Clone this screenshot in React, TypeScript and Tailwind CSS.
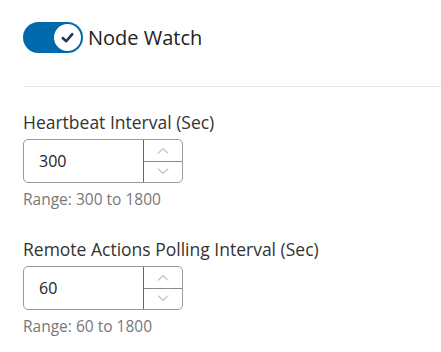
import { useState } from "react"

interface NumberFieldProps {
  label: string
  value: number
  min: number
  max: number
}

function NumberField({ label, value, min, max }: NumberFieldProps) {
  const [val, setVal] = useState(String(value))

  return (
    <div className="flex flex-col">
      <label className="text-[17.5px] leading-[24px] text-[#333]">{label}</label>
      <div className="mt-[5px] flex h-[44px] w-[160px] rounded-[5px] border border-[#9a9a9a] bg-white">
        <input
          value={val}
          onChange={(e) => setVal(e.target.value)}
          className="w-[119px] bg-transparent pl-[15px] text-[16px] text-[#222] outline-none"
        />
        <div className="flex w-[40px] flex-col border-l border-[#666]">
          <button type="button" className="flex flex-1 items-center justify-center border-b border-[#8a8a8a]">
            <svg width="12" height="7" viewBox="0 0 12 7" fill="none" stroke="#999" strokeWidth="1">
              <path d="M1 6.5 6 1.5 11 6.5" />
            </svg>
          </button>
          <button type="button" className="flex flex-1 items-center justify-center">
            <svg width="12" height="7" viewBox="0 0 12 7" fill="none" stroke="#999" strokeWidth="1">
              <path d="M1 0.5 6 5.5 11 0.5" />
            </svg>
          </button>
        </div>
      </div>
      <div className="mt-[6px] text-[15.5px] leading-[20px] text-[#777]">
        Range: {min} to {max}
      </div>
    </div>
  )
}

export default function App() {
  const [on, setOn] = useState(true)

  return (
    <div className="min-h-screen bg-white pl-[23px] pt-[22px]" style={{ fontFamily: '"Open Sans", sans-serif' }}>
      <div className="flex items-center gap-[5px]">
        <button
          type="button"
          onClick={() => setOn(!on)}
          className={`flex h-[31px] w-[60px] items-center rounded-full px-[2px] ${on ? "justify-end bg-[#006aac]" : "justify-start bg-[#bbb]"}`}
        >
          <span className="flex h-[27px] w-[27px] items-center justify-center rounded-full bg-white">
            <svg width="17" height="17" viewBox="0 0 16 16" fill="none" stroke="#1f3550" strokeWidth="2.4" strokeLinecap="round" strokeLinejoin="round">
              <path d="M3.5 8.5 6.8 11.5 12.5 4.8" />
            </svg>
          </span>
        </button>
        <span className="text-[20px] leading-[28px] text-[#222]">Node Watch</span>
      </div>

      <div className="mt-[33px] h-px bg-[#e6e6e6]" />

      <div className="mt-[23px] flex flex-col gap-[28px]">
        <NumberField label="Heartbeat Interval (Sec)" value={300} min={300} max={1800} />
        <NumberField label="Remote Actions Polling Interval (Sec)" value={60} min={60} max={1800} />
      </div>
    </div>
  )
}
